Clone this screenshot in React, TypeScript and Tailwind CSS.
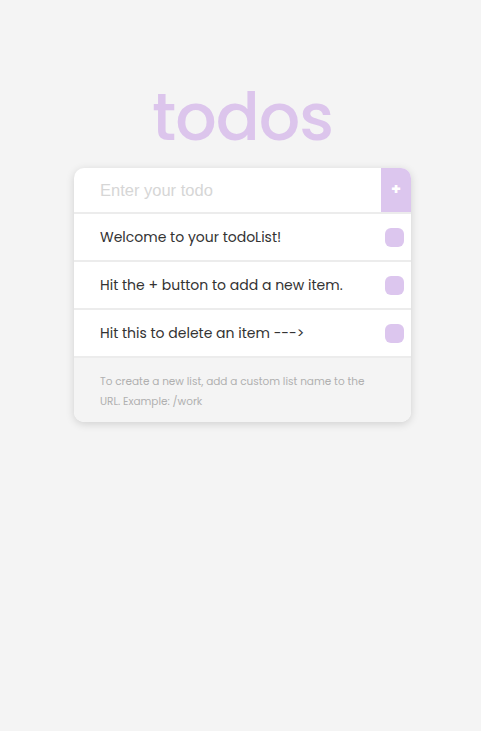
import { useState } from 'react';

export default function App() {
  const [items, setItems] = useState([
    'Welcome to your todoList!',
    'Hit the + button to add a new item.',
    'Hit this to delete an item --->',
  ]);
  const [text, setText] = useState('');

  return (
    <div className="min-h-screen bg-[#f4f4f4] pl-[4px] pt-[83px]" style={{ fontFamily: 'Poppins, Inter, "Noto Sans", sans-serif' }}>
      {/* Title */}
      <h1 className="text-center text-[65px] font-medium leading-[70px] tracking-[-1px] text-[#dcc5ec]">todos</h1>

      <div className="mx-auto mt-[15px] w-[337px] overflow-hidden rounded-[10px] bg-white shadow-[0_2px_8px_rgba(0,0,0,0.15)]">
        {/* Input */}
        <div className="flex h-[46px] border-b-2 border-[#ececec]">
          <input
            value={text}
            onChange={(e) => setText(e.target.value)}
            placeholder="Enter your todo"
            className="min-w-0 flex-1 pl-[26px] text-[16.5px] text-[#333] placeholder-[#d6d6d6] outline-none"
            style={{ fontFamily: '"Liberation Sans", Arial, sans-serif' }}
          />
          <button
            onClick={() => {
              if (!text.trim()) return;
              setItems([...items, text]);
              setText('');
            }}
            className="w-[30px] bg-[#dcc6ee] text-[16px] font-bold text-white"
          >
            +
          </button>
        </div>

        {/* Items */}
        {items.map((item, i) => (
          <div key={i} className="flex h-[48px] items-center justify-between border-b-2 border-[#ececec] pl-[26px] pr-[7px] last:border-b-0">
            <span className="text-[14px] text-[#333]">{item}</span>
            <button
              onClick={() => setItems(items.filter((_, j) => j !== i))}
              className="h-[19px] w-[19px] rounded-[6px] bg-[#dcc6ee]"
            />
          </div>
        ))}

        {/* Footer */}
        <div className="bg-[#f4f4f4] px-[26px] pb-[10px] pt-[14px] text-[10.5px] leading-[20px] text-[#b0b0b0]">
          To create a new list, add a custom list name to the URL. Example: /work
        </div>
      </div>
    </div>
  );
}
